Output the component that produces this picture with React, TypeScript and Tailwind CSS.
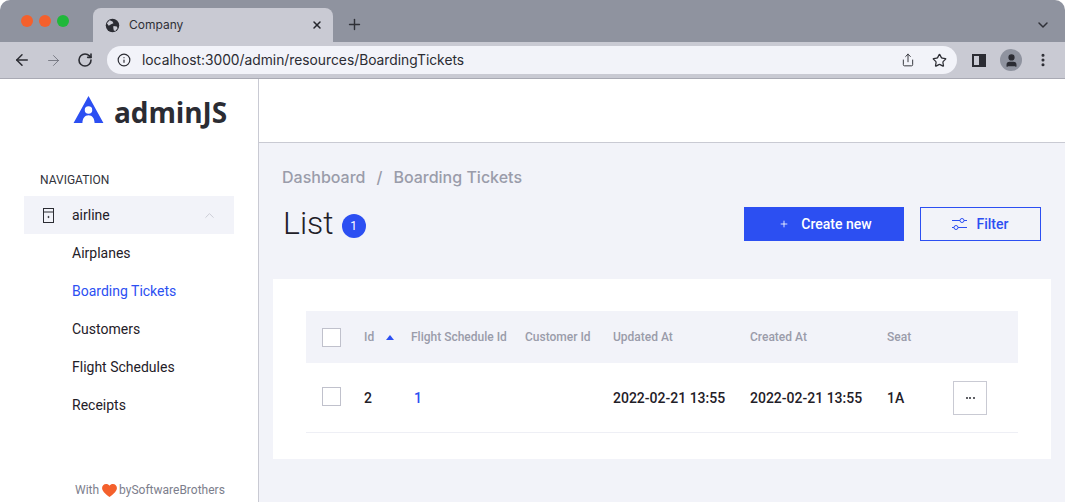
import { ArrowLeft, ArrowRight, ChevronDown, ChevronUp, EllipsisVertical, Info, Plus, RotateCw, Share, Star, User, X } from 'lucide-react';

const columns = 'grid grid-cols-[42px_47px_114px_88px_137px_137px_66px_65px] items-center pl-4';

function BrowserChrome() {
  return (
    <div className="font-['Inter',sans-serif]">
      {/* Tab strip */}
      <div className="flex h-[42px] items-end rounded-t-[10px] bg-[#8f939f]">
        <div className="flex h-[34px] items-center gap-[6px] pb-[9px] pl-[21px]">
          <span className="h-3 w-3 rounded-full bg-[#f4602c]" />
          <span className="h-3 w-3 rounded-full bg-[#f4602c]" />
          <span className="h-3 w-3 rounded-full bg-[#20b83a]" />
        </div>
        <div className="ml-[24px] flex h-[34px] w-[240px] items-center rounded-t-[8px] bg-[#c9cad3] pl-[12px] pr-[10px] text-[12px] text-[#2f3037]">
          <svg className="h-[15px] w-[15px]" viewBox="0 0 16 16">
            <circle cx="8" cy="8" r="7.2" fill="#2b2c33" />
            <path d="M5 2.500l3 1.200 1 2-2.500 1L4 8.200l-2-2.500zM9 8.500l3.600.6.8 1.800-2.400 3-1.600-.6-.6-3z" fill="#c9cad3" />
          </svg>
          <span className="ml-[9px] flex-1">Company</span>
          <X className="h-[12px] w-[12px] text-[#26272d]" strokeWidth={3} />
        </div>
        <Plus className="mb-[9px] ml-[13px] h-[17px] w-[17px] text-[#2f3037]" strokeWidth={2} />
        <ChevronDown className="mb-[9px] ml-auto mr-[14px] h-[16px] w-[16px] text-[#2f3037]" strokeWidth={2.2} />
      </div>
      {/* Toolbar */}
      <div className="flex h-[37px] items-center border-b border-[#a9aab4] bg-[#c9cad3] pl-[13px] pr-[14px]">
        <ArrowLeft className="h-[18px] w-[18px] text-[#2b2c33]" strokeWidth={2} />
        <ArrowRight className="ml-[14px] h-[17px] w-[17px] text-[#6d6f7a]" strokeWidth={1.2} />
        <RotateCw className="ml-[15px] h-[16px] w-[16px] text-[#2b2c33]" strokeWidth={2.4} />
        <div className="ml-[14px] flex h-[28px] w-[850px] items-center rounded-full bg-[#f2f3f9] px-[10px] text-[13.8px] text-[#2b2c33]">
          <Info className="h-[14px] w-[14px]" strokeWidth={2} />
          <span className="ml-[11px] flex-1">localhost:3000/admin/resources/BoardingTickets</span>
          <Share className="mr-[17px] h-[14px] w-[14px]" strokeWidth={1.6} />
          <Star className="h-[15px] w-[15px]" strokeWidth={2} />
        </div>
        <div className="ml-[15px] h-[13px] w-[14px] border-2 border-r-[7px] border-[#2b2c33]" />
        <div className="ml-[14px] flex h-[22px] w-[22px] items-center justify-center rounded-full bg-[#8f939f]">
          <User className="h-[15px] w-[15px] fill-[#2b2c33] text-[#2b2c33]" strokeWidth={2} />
        </div>
        <EllipsisVertical className="ml-[13px] h-[16px] w-[16px] text-[#2b2c33]" strokeWidth={2.6} />
      </div>
    </div>
  );
}

function Sidebar() {
  return (
    <aside className="flex w-[259px] shrink-0 flex-col border-r border-[#c9cad3] bg-white">
      <div className="flex h-[64px] items-start pl-[73px] pt-[17px]">
        <svg className="h-[28px] w-[31px]" viewBox="0 0 32 30">
          <path d="M16 0L32 29H22.500C22.500 24 20 20.500 16 20.500C12 20.500 9.500 24 9.500 29H0Z" fill="#2c4ff2" />
          <circle cx="16" cy="15" r="4" fill="#fff" />
        </svg>
        <span className="ml-[10px] mt-[1px] font-['Open_Sans',sans-serif] text-[28px] font-bold leading-[30px] tracking-[-0.1px] text-[#2b2c33]">adminJS</span>
      </div>
      <div className="pl-[40px] pt-[29px] font-['Roboto',sans-serif] text-[12px] leading-[16px] text-[#32333b]">NAVIGATION</div>
      <div className="mx-6 mt-[8px] flex h-[38px] items-center bg-[#f2f3f9] pl-[19px] pr-[17px] font-['Roboto',sans-serif] text-[14px] text-[#1f2028]">
        <svg className="h-[15px] w-[11px]" viewBox="0 0 11 15" fill="none" stroke="#2b2c33" strokeWidth="1">
          <rect x="0.500" y="0.500" width="10" height="14" />
          <path d="M0.500 4h10" />
          <circle cx="5.500" cy="9" r="0.600" fill="#2b2c33" />
        </svg>
        <span className="ml-[18px] flex-1">airline</span>
        <ChevronUp className="h-[15px] w-[15px] text-[#c9cad3]" strokeWidth={1.5} />
      </div>
      <nav className="flex flex-col pl-[72px] font-['Roboto',sans-serif] text-[14px] text-[#1f2028]">
        <a className="flex h-[38px] items-center">Airplanes</a>
        <a className="flex h-[38px] items-center text-[#2c4ff2]">Boarding Tickets</a>
        <a className="flex h-[38px] items-center">Customers</a>
        <a className="flex h-[38px] items-center">Flight Schedules</a>
        <a className="flex h-[38px] items-center">Receipts</a>
      </nav>
      <div className="mt-auto flex items-center pb-[3px] pl-[75px] font-['Roboto',sans-serif] text-[12px] leading-[18px] text-[#7c7e8c]">
        With
        <svg className="ml-[3px] mr-[2px] h-[13px] w-[15px]" viewBox="0 0 24 21">
          <path d="M12 21C4 15 0 11 0 6.500 0 3 2.700 0 6.500 0 8.800 0 10.800 1.100 12 3 13.200 1.100 15.200 0 17.500 0 21.300 0 24 3 24 6.500 24 11 20 15 12 21Z" fill="#f4602c" />
        </svg>
        bySoftwareBrothers
      </div>
    </aside>
  );
}

function Header() {
  return (
    <div className="font-['Roboto',sans-serif]">
      <div className="flex h-[64px] border-b border-[#c9cad3] bg-white" />
      <div className="px-[24px] pt-[22px]">
        <div className="-ml-[1px] font-['Inter',sans-serif] text-[16px] font-medium leading-[24px] text-[#9a9caa]">
          Dashboard<span className="mx-[11px]">/</span>Boarding Tickets
        </div>
        <div className="mt-[14px] flex items-start justify-between">
          <div className="flex items-center pt-[1px]">
            <h1 className="text-[32px] font-light leading-[38px] text-[#1f2028]">List</h1>
            <span className="ml-[8px] mt-[5px] flex h-6 w-6 items-center justify-center rounded-full bg-[#2c4ff2] text-[12px] text-white">1</span>
          </div>
          <div className="mt-[4px] flex gap-4 text-[14px] font-medium">
            <button className="flex h-[34px] w-[160px] items-center justify-center gap-[12px] bg-[#2c4ff2] pl-[3px] text-white">
              <Plus className="h-[10px] w-[10px]" strokeWidth={2} />
              Create new
            </button>
            <button className="flex h-[34px] w-[121px] items-center justify-center gap-[10px] border border-[#2c4ff2] pr-[1px] text-[#2c4ff2]">
              <svg className="h-[14px] w-[15px]" viewBox="0 0 15 14" fill="none" stroke="#2c4ff2" strokeWidth="1">
                <path d="M0 3.500h8M12 3.500h3M0 10.500h2M6 10.500h9" />
                <circle cx="10" cy="3.500" r="2" />
                <circle cx="4" cy="10.500" r="2" />
              </svg>
              Filter
            </button>
          </div>
        </div>
      </div>
    </div>
  );
}

function TicketsTable() {
  return (
    <div className="mx-[14px] mt-[37px] bg-white px-[33px] pb-[26px] pt-[32px] font-['Roboto',sans-serif]">
      <div className={`${columns} h-[52px] bg-[#f2f3f9] text-[12px] font-medium text-[#9a9caa]`}>
        <span className="h-[19px] w-[19px] border border-[#c0c1cc] bg-white" />
        <span className="flex items-center gap-[12px]">
          Id
          <svg className="h-[5px] w-[8px]" viewBox="0 0 8 5"><path d="M4 0l4 5H0z" fill="#2c4ff2" /></svg>
        </span>
        <span>Flight Schedule Id</span>
        <span>Customer Id</span>
        <span>Updated At</span>
        <span>Created At</span>
        <span>Seat</span>
        <span />
      </div>
      <div className={`${columns} h-[70px] border-b border-[#eeeff5] pb-[2px] text-[14px] font-medium text-[#1f2028]`}>
        <span className="h-[19px] w-[19px] border border-[#c0c1cc] bg-white" />
        <span className="pt-[3px]">2</span>
        <span className="pl-[3px] pt-[3px] text-[#2c4ff2]">1</span>
        <span />
        <span className="pt-[3px]">2022-02-21 13:55</span>
        <span className="pt-[3px]">2022-02-21 13:55</span>
        <span className="pt-[3px]">1A</span>
        <button className="mt-[2px] flex h-[34px] w-[34px] items-center justify-center border border-[#c9cad3] text-[#2b2c33]">
          <span className="flex gap-[1.5px]">
            <span className="h-[2px] w-[2px] rounded-full bg-[#2b2c33]" />
            <span className="h-[2px] w-[2px] rounded-full bg-[#2b2c33]" />
            <span className="h-[2px] w-[2px] rounded-full bg-[#2b2c33]" />
          </span>
        </button>
      </div>
    </div>
  );
}

export default function App() {
  return (
    <div className="flex h-[502px] w-[1065px] flex-col overflow-hidden bg-white">
      <BrowserChrome />
      <div className="flex min-h-0 flex-1">
        <Sidebar />
        <main className="min-w-0 flex-1 bg-[#f2f3f9]">
          <Header />
          <TicketsTable />
        </main>
      </div>
    </div>
  );
}
